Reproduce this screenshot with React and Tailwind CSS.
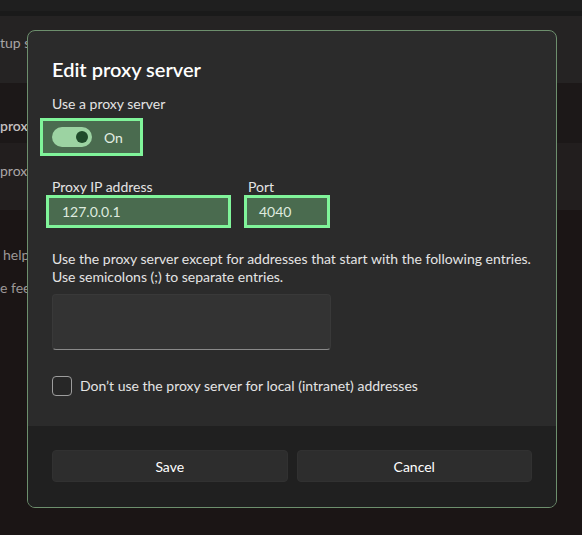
const font = "font-['Segoe_UI','Lato','Noto_Sans',sans-serif]";

const BackgroundPage = () => (
  <div className="flex flex-col h-full">
    <div className="h-[11px] bg-[#1f1f1f]"></div>
    <div className="h-[5px] bg-[#1a1a1a]"></div>
    <div className="h-[67px] bg-[#252323] flex items-center pb-[14px]">
      <span className="text-[14px] text-[#a9a5a5]">tup s</span>
    </div>
    <div className="h-[60px] bg-[#1c1818] flex items-end pb-[7px]">
      <span className="text-[14px] font-semibold text-[#c4c0c0]">proxy</span>
    </div>
    <div className="h-[67px] bg-[#221e1e] flex items-start pt-[17px]">
      <span className="text-[14px] text-[#aaa6a6]">proxy</span>
    </div>
    <div className="flex-1 bg-[#1b1515] flex flex-col pt-[35px] gap-[13px] text-[14px] text-[#9c9797]">
      <span className="ml-[3px] leading-5">help</span>
      <span className="leading-5">e fee</span>
    </div>
  </div>
);

const Toggle = () => (
  <div className="-ml-3 mt-1 w-[103px] h-[38px] border-[3px] border-[#80f49a] bg-[#4a6b4f] flex items-center pl-[9px] gap-3">
    <div className="w-10 h-5 rounded-full bg-[#9cd3a2] flex items-center justify-end pr-1">
      <div className="w-3 h-3 rounded-full bg-[#1f4a2a]"></div>
    </div>
    <span className="text-[14px] text-[#e2eee2]">On</span>
  </div>
);

const HighlightInput = ({ value, className }) => (
  <div className={`h-[33px] border-[3px] border-[#80f49a] bg-[#4a6b4f] flex items-center text-[14px] text-[#dfeadf] ${className}`}>
    {value}
  </div>
);

const Checkbox = () => (
  <label className="flex items-center gap-2 mt-[25px]">
    <span className="w-5 h-5 rounded border border-[#9d9d9d] bg-[#272727]"></span>
    <span className="text-[14px] text-[#e4e4e4]">Don’t use the proxy server for local (intranet) addresses</span>
  </label>
);

const Dialog = () => (
  <div className="absolute left-[27px] top-[30px] w-[530px] h-[478px] rounded-lg border border-[#6d8f6d] bg-[#2b2b2b] overflow-hidden flex flex-col">
    <div className="flex-1 flex flex-col px-6 pt-[24px]">
      <h2 className="text-[20px] leading-7 font-semibold text-white">Edit proxy server</h2>
      <p className="mt-[11px] text-[14px] leading-5 text-[#e4e4e4]">Use a proxy server</p>
      <Toggle />

      <div className="flex mt-[22px]">
        <div className="w-[196px] flex flex-col">
          <span className="text-[14px] leading-[17px] text-[#e4e4e4]">Proxy IP address</span>
          <HighlightInput value="127.0.0.1" className="-ml-[6px] w-[185px] pl-[13px]" />
        </div>
        <div className="flex flex-col">
          <span className="text-[14px] leading-[17px] text-[#e4e4e4]">Port</span>
          <HighlightInput value="4040" className="-ml-1 w-[86px] pl-3" />
        </div>
      </div>

      <p className="mt-[22px] text-[14px] leading-[18px] text-[#e4e4e4]">
        Use the proxy server except for addresses that start with the following entries.
        <br />
        Use semicolons (;) to separate entries.
      </p>
      <div className="mt-2 w-[279px] h-[56px] rounded bg-[#333333] border border-[#393939] border-b-[#8a8a8a]"></div>

      <Checkbox />
    </div>

    <div className="h-[81px] bg-[#202020] px-6 pt-[24px] flex gap-[9px]">
      <button className="flex-1 h-8 rounded bg-[#2d2d2d] border border-[#313131] text-[14px] text-white">Save</button>
      <button className="flex-1 h-8 rounded bg-[#2d2d2d] border border-[#313131] text-[14px] text-white">Cancel</button>
    </div>
  </div>
);

export default function App() {
  return (
    <div className={`relative w-[582px] h-[535px] overflow-hidden bg-[#1b1515] ${font}`}>
      <BackgroundPage />
      <Dialog />
    </div>
  );
}
